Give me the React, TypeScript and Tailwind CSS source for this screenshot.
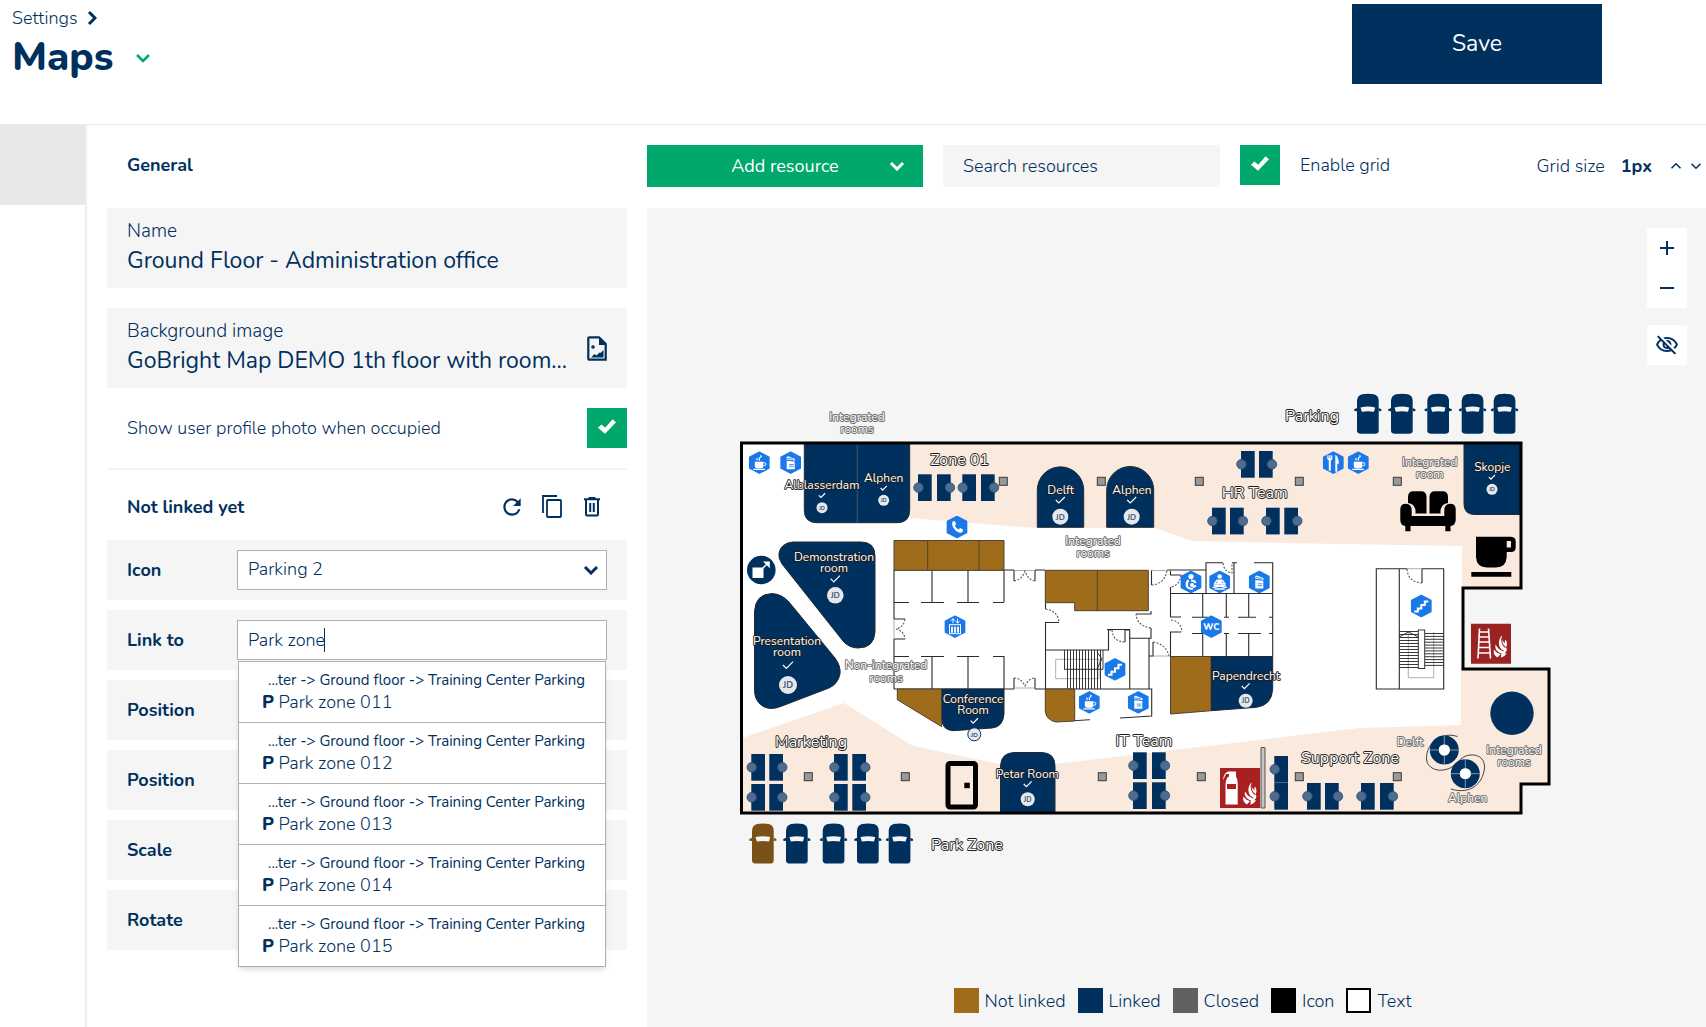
import type { ReactNode } from 'react'
import { MdAdd, MdOutlineVisibilityOff, MdRefresh, MdRemove } from 'react-icons/md'

const NAVY = '#00305e'
const BROWN = '#9f6c1c'
const PEACH = '#faeade'

const results = ['Park zone 011', 'Park zone 012', 'Park zone 013', 'Park zone 014', 'Park zone 015']

const legend = [
  { label: 'Not linked', box: 'bg-[#9f6c1c]' },
  { label: 'Linked', box: 'bg-[#00305e]' },
  { label: 'Closed', box: 'bg-[#606060]' },
  { label: 'Icon', box: 'bg-black' },
  { label: 'Text', box: 'border-2 border-black bg-white' },
]

function Chevron({ className, width = 3 }: { className: string; width?: number }) {
  return (
    <svg viewBox="0 0 16 10" fill="none" stroke="currentColor" strokeWidth={width} className={className} aria-hidden="true">
      <path d="M2 2l6 6 6-6" />
    </svg>
  )
}

function GreenCheck({ id }: { id: string }) {
  return (
    <span className="relative block size-10 shrink-0">
      <input id={id} type="checkbox" defaultChecked className="block size-10 appearance-none bg-[#00a86b]" />
      <svg viewBox="0 0 20 16" className="pointer-events-none absolute left-[11px] top-[11px] h-[15px] w-[18px]" aria-hidden="true">
        <path d="M0 9.500l3.800-3.800 4.200 3.800L16.200 0 20 3.300 7.800 16z" fill="#fff" />
      </svg>
    </span>
  )
}

// ---- floor plan pieces ----

type LabelProps = { x: number; y: number; lines: string[]; size?: number; gap?: number; soft?: boolean }

function Label({ x, y, lines, size = 12, gap = 12, soft }: LabelProps) {
  return (
    <text
      textAnchor="middle"
      fontSize={size}
      fontWeight="400"
      fill="#fff"
      stroke={soft ? '#6b6b6b' : '#1c1c1c'}
      strokeWidth="1.800"
      strokeLinejoin="round"
      paintOrder="stroke"
    >
      {lines.map((line, i) => (
        <tspan key={line} x={x} y={y + size * 0.32 + i * gap}>
          {line}
        </tspan>
      ))}
    </text>
  )
}

function Badge({ x, y, r, check, ring }: { x: number; y: number; r: number; check: number; ring?: boolean }) {
  const s = r / 8
  return (
    <g>
      <path
        d={`M${x - 4.5 * s} ${check}l${3 * s} ${3 * s} ${6 * s} ${-6 * s}`}
        fill="none"
        stroke="#fff"
        strokeWidth="1.2"
      />
      <circle cx={x} cy={y} r={r} fill="#e6e8ec" stroke={ring ? NAVY : 'none'} strokeWidth="1" />
      <text x={x} y={y + r * 0.37} textAnchor="middle" fontSize={r} fontWeight="700" fill="#3c5878">
        JD
      </text>
    </g>
  )
}

function Desk({ x, y, side }: { x: number; y: number; side: 'l' | 'r' }) {
  return (
    <g>
      <rect x={x} y={y} width="13.7" height="26.7" fill={NAVY} />
      <circle cx={side === 'l' ? x + 0.5 : x + 12.9} cy={y + 13.3} r="4.8" fill="#4d6c8e" stroke="#234a74" strokeWidth=".8" />
    </g>
  )
}

function Car({ x, y, fill = NAVY }: { x: number; y: number; fill?: string }) {
  return (
    <g transform={`translate(${x} ${y})`}>
      <path d="M5 .2Q11 -.6 17 .2Q21.600 1.500 21.700 7V37Q21.500 39.800 18 39.800H4Q.3 39.800 0 37V7Q.3 1.500 5 .2z" fill={fill} />
      <path d="M0 14L-2.700 15.300V17L0 17.200zM21.700 14L24.400 15.300V17L21.700 17.200z" fill={fill} />
      <path d="M3.500 13.400Q11 11.500 18.200 13.400L17 17.800Q11 16.800 4.800 17.800z" fill="#f5f5f5" />
    </g>
  )
}

function Hex({ x, y, children }: { x: number; y: number; children: ReactNode }) {
  return (
    <g transform={`translate(${x} ${y})`}>
      <path
        d="M0 -10.500L9.600 -5.500V5.500L0 10.500L-9.600 5.500V-5.500z"
        fill="#1a78e8"
        stroke="#1a78e8"
        strokeWidth="1.500"
        strokeLinejoin="round"
      />
      {children}
    </g>
  )
}

const CoffeeGlyph = () => (
  <g fill="#fff">
    <path d="M-4.500 -1H4V3Q4 5.500 1.500 5.500H-2Q-4.500 5.500 -4.500 3zM-6 6h11.500v1.200H-6z" />
    <path d="M4 0h1.200Q6.500 0 6.500 1.500T5 3H4" fill="none" stroke="#fff" />
    <path d="M-2 -2.200q-1-1.300 0-2.400M.5 -2.200q-1.500-1.800.5-3.200t0-1.800" fill="none" stroke="#fff" strokeWidth="1.200" />
  </g>
)

const PrinterGlyph = () => (
  <g fill="#fff">
    <path d="M-4 -2L4 -1.200V6.500H-4zM-4 -3.200L4.500 -2.200L4 -4L-2.500 -6.500L-4 -6z" />
    <path d="M-1.500 1.800h4.500M-1.500 3.600h4.500M-3.500 -4.500L2.500 -3.500" stroke="#1a78e8" strokeWidth=".8" />
  </g>
)

const StairsGlyph = () => (
  <path d="M-7 5.500h3.500v-3H0v-3.500h3.500V-4.500h3.500" fill="none" stroke="#fff" strokeWidth="2" />
)

function Flames({ x, y, ground }: { x: number; y: number; ground: string }) {
  return (
    <g transform={`translate(${x} ${y})`}>
      <path
        d="M4 23C-1 20 0 16 1 14.500C2 17 4 18.500 6 18.500C2 16 1 12 2.500 9.500C3.500 12 5.500 14.500 8 15C4.500 11 4.500 5 8.500 1C8 4 9 7 11.500 9C11 7 11.500 6 12 5C14.500 9 13.500 12 11.500 14L13 13C14 16 12.500 18 10.500 19L13 18.500C12 21 10 22.500 7 23C8 21.500 8 20.500 7 19.500C6 21.500 5 21 4 23z"
        fill="#fff"
      />
      <path d="M1 14.500Q3 18 8 19.500M2.500 9.500Q4.500 14 10 16.500M8.500 3Q7 9 12 13" fill="none" stroke={ground} strokeWidth="1.100" />
    </g>
  )
}

const desks: [number, number, 'l' | 'r'][] = [
  [918, 474.3, 'l'], [937, 474.3, 'r'], [962.3, 474.3, 'l'], [981, 474.3, 'r'],
  [1241, 451, 'l'], [1259, 451, 'r'],
  [1212, 507.7, 'l'], [1230, 507.7, 'r'], [1266, 507.7, 'l'], [1284.3, 507.7, 'r'],
  [751.3, 754, 'l'], [769.3, 754, 'r'], [834, 754, 'l'], [852.3, 754, 'r'],
  [751.3, 784, 'l'], [769.3, 784, 'r'], [834, 784, 'l'], [852.3, 784, 'r'],
  [1133, 752.3, 'l'], [1152, 752.3, 'r'], [1133, 782.3, 'l'], [1152, 782.3, 'r'],
  [1274.3, 756, 'l'], [1274.3, 783, 'l'],
  [1307, 783, 'l'], [1325, 783, 'r'], [1361, 783, 'l'], [1380, 783, 'r'],
]

const pillars = [
  [1003.3, 481.3], [1101.3, 481.3], [1199.3, 481.3], [1299.3, 481.3], [1397.3, 481.3],
  [808.3, 776.7], [905.3, 776.7], [1102.3, 776.7], [1201.3, 776.7], [1299.3, 776.7], [1397.3, 776.7],
]

const OUTLINE = 'M741.500 443H1521V588H1463V669H1549V784H1521V813H741.500z'

function FloorPlan() {
  return (
    <svg viewBox="647 208 1059 819" className="block w-full" role="img" aria-label="Ground floor map">
      <path d={OUTLINE} fill="#fff" />
      <path d="M910 443H1521V588H1462V546L1280 543L1192 541L1155 528H1035L910 518z" fill={PEACH} />
      <path d="M742 738L844 703L913 746L1000 764H1055L1360 728L1461 725V669H1549V784H1521V813H742z" fill={PEACH} />

      {/* inner walls */}
      <g fill="none" stroke="#2b2b2b" strokeWidth="1.1">
        <path d="M894 570V619H905M894 639H905M894 639V689M894 570H1014M932 570V602M968 570V602M1004 570V602" />
        <path d="M894 602.500H909M921 602.500H944M957 602.500H979M993 602.500H1004M894 656.500H909M921 656.500H944M957 656.500H979M993 656.500H1004" />
        <path d="M932 656V689M968 656V689M1004 656V689M894 689H1014M1035 689H1045" />
        <path d="M1014 570V581M1035 570V581M1014 689V678M1035 689V678M1035 570H1045M1167 570H1206" />
        <path d="M1045.500 603V609M1045.500 622.500H1059M1045.500 622V689M1045 650H1108.500V630H1111M1125 642V630H1129.700V689M1130 638.300H1151V628M1149 638V689M1045 689H1151.700V716L1120 718M1151 611V614H1136M1107 629.500H1130M1148.500 656H1153V642M1151.500 570V585" />
        <path d="M1170.500 571V575H1181M1170.500 587V617H1181M1206 593V562.700H1223M1232 562.700H1237M1254 562.700H1272.700V656M1234 563V593M1170 593.500H1272.700M1202.700 593V617M1226.300 593V617M1248.700 593V617" />
        <path d="M1192 617.300H1208M1224 617.300H1229M1238 617.300H1256M1269 617.300H1273M1170.500 656V632H1181M1192 633.500H1204M1224 633.500H1229M1238 633.500H1261M1269 633.500H1273M1202.700 633V656M1226.300 633V656M1248.700 633V656M1170 656.500H1273" />
        <path d="M1407 568.700H1376.300V689H1443.700V568.700H1422V583M1399.300 568.700V689" />
      </g>
      <g fill="none" stroke="#555" strokeWidth="1.1" strokeDasharray="2 1.500">
        <path d="M1014 581Q1022 580 1025 571Q1028 580 1035 581M1014 678Q1021 678 1025 686Q1029 678 1035 678" />
        <path d="M905 619Q904 627 896 629Q904 631 905 639M1151.500 585Q1165 584 1167 570M1045.500 609Q1058 611 1059 622" />
        <path d="M1151 628Q1137 626 1136 614M1112 630Q1113 642 1125 642M1153 642Q1166 644 1169 656M1181 575Q1180 585 1171 587M1171 620Q1181 621 1182 632M1223 563Q1224 572 1232 573V563M1407 569Q1408 582 1422 583" />
      </g>
      <g fill="none" stroke="#999" strokeWidth=".8">
        <path d="M1014 570.500H1035M1014 688H1035M1151 570.500H1167M1153 656H1170M894 619V639M1407 568.700H1422" />
        <path d="M1055.700 659.300H1099V678.700H1055.700zM1408.300 632V677.700H1433.700V632" />
      </g>

      {/* stairs */}
      <g stroke="#222" strokeWidth=".9" fill="none">
        {Array.from({ length: 13 }, (_, i) => (
          <path key={i} d={`M${1064.5 + i * 3} 650V${i > 0 ? 689 : 669}`} />
        ))}
        <path d="M1064 669.300H1103V650" />
        {Array.from({ length: 13 }, (_, i) => (
          <path key={i} d={`M1399.300 ${631.5 + i * 3}H1418.300${i < 12 ? `M1424.700 ${633.5 + i * 2.9}H1443.700` : ''}`} />
        ))}
        <path d="M1399.300 637L1408.300 632L1418.300 637M1097 652L1102 659L1097 669" />
        <rect x="1418.300" y="630" width="6.400" height="38.500" fill="#fff" />
      </g>

      {/* rooms that are not linked */}
      <g fill={BROWN} stroke="#4c4334" strokeWidth="1">
        <path d="M894 540.500H1004V570.300H894zM927.700 540.500V570.300M979 540.500V570.300" />
        <path d="M1045.300 570.300H1148.300V610.700H1074.700V602.700H1045.300zM1097.300 570.300V610.700" />
        <path d="M897.300 689H941.700V726.700L897.300 699.700z" />
        <path d="M1045.300 689H1074.700V721L1056 722Q1046 720 1045.300 711z" />
        <path d="M1170.500 656.500H1211.300V710.700L1170.500 714z" />
      </g>
      <path d="M1074.700 720.700L1090 719.700" stroke="#333" />

      {/* linked rooms */}
      <g fill={NAVY} stroke="#232a33" strokeWidth="1">
        <path d="M804.300 444H909.700V510Q909.700 522.700 897 522.700H817Q804.300 522.700 804.300 510z" />
        <path d="M857.300 444V522.700" stroke="#4a5766" />
        <path d="M793 542H861Q875 542 875 556V632Q874 648 858 648Q849 648 843 641L782 564Q778 558 779 553Q781 543 793 542z" />
        <path d="M754.500 612Q755 594 772 593.500Q782 594 789 602L835 658Q841 666 840 674Q838 684 829 688L782 706Q768 712 760 704Q754.500 699 754.500 690z" />
        <path d="M942 689H1004V714Q1003 727 992 728L953 730.700Q942 730 942 719z" />
        <path d="M1037.300 527.300V490A23.200 23.200 0 0 1 1083.700 490V527.300z" />
        <path d="M1106.700 527.300V490A23.500 23.500 0 0 1 1153.700 490V527.300z" />
        <path d="M1211.300 656.500H1272.700V689Q1272 705 1256.700 707.300L1211.300 710.700z" />
        <path d="M1464 444H1520V514.500H1474Q1464 514 1464 504z" />
        <path d="M1000.500 812V766Q1001 753 1014 752.500H1042Q1055 753 1055 766V812z" />
      </g>
      <circle cx="1512" cy="713.300" r="21.700" fill={NAVY} />

      {/* round tables */}
      <path d="M1457.500 736.500C1440 731 1426 744 1426.500 759C1427 768 1437 772 1446 769.500C1457 767 1459 756 1470 755C1480 754 1485 760 1484.500 768C1483 784 1470 795 1451 789" fill="none" stroke="#333" strokeWidth=".9" />
      {[[1444.3, 750], [1465.3, 773.7]].map(([x, y]) => (
        <g key={x}>
          <circle cx={x} cy={y} r="10" fill="none" stroke={NAVY} strokeWidth="9" />
          <circle cx={x} cy={y} r="5.500" fill="#fff" />
          <path d={`M${x} ${y - 14.5}V${y - 5}M${x} ${y + 14.5}V${y + 5}M${x - 14.5} ${y}H${x - 5}M${x + 14.5} ${y}H${x + 5}`} stroke="#9db0c4" strokeWidth=".8" />
        </g>
      ))}

      <path d={OUTLINE} fill="none" stroke="#000" strokeWidth="3" />

      {pillars.map(([x, y]) => (
        <rect key={`${x}-${y}`} x={x - 4} y={y - 4} width="8" height="8" fill="#999" stroke="#3a3a3a" />
      ))}
      {desks.map(([x, y, side]) => (
        <Desk key={`${x}-${y}`} x={x} y={y} side={side} />
      ))}
      {[1357, 1391, 1427.3, 1461.7, 1493.7].map((x) => (
        <Car key={x} x={x} y={394} />
      ))}
      {[752, 786, 822.7, 857, 888.7].map((x, i) => (
        <Car key={x} x={x} y={823.7} fill={i === 0 ? '#7a5218' : NAVY} />
      ))}

      {/* expand marker */}
      <circle cx="761.300" cy="570" r="14.300" fill={NAVY} />
      <path d="M752.500 567.500h11v10.500h-11zM763 561.500h6.800v6.800z" fill="#fff" />
      <path d="M762 569l6-6" stroke="#fff" strokeWidth="1.500" />

      {/* facilities */}
      <Hex x={759.3} y={462.7}><CoffeeGlyph /></Hex>
      <Hex x={790.7} y={462.7}><PrinterGlyph /></Hex>
      <Hex x={957} y={527}>
        <path d="M-4.500 -5.500L-2.200 -6L-.8 -2.800L-2.200 -1.400Q-1 1.200 1.600 2.400L3 1L6 2.400L5.500 5Q3 7 -1.500 3.500Q-6 -1 -4.500 -5.500z" fill="#fff" />
      </Hex>
      <Hex x={955} y={626.7}>
        <rect x="-5.500" y="-2" width="11" height="9" fill="none" stroke="#fff" />
        <path d="M-3 0v6M0 0v6M3 0v6" stroke="#fff" strokeWidth="1.800" />
        <path d="M-2 -3.500V-8M-4 -6l2-2 2 2M2.500 -8V-3.500M.6 -5.500l2 2 2-2" fill="none" stroke="#fff" />
      </Hex>
      <Hex x={1191} y={582}>
        <circle cx="0" cy="-5.500" r="2.600" fill="#fff" />
        <path d="M-2.500 -2Q-5 1 -4 4.500Q-2 7.500 2 6.500" fill="none" stroke="#fff" strokeWidth="2.200" />
        <path d="M0 -1.500Q4 -1.500 4.500 1" fill="none" stroke="#fff" strokeWidth="2" />
        <circle cx="1" cy="3" r="2" fill="#fff" />
        <path d="M2 5.500L5 3.500" stroke="#fff" strokeWidth="2" />
      </Hex>
      <Hex x={1219.700} y={582}>
        <circle cx="0" cy="-5.500" r="2.300" fill="#fff" />
        <path d="M-2.500 -2.500h5v5h-5z" fill="#fff" />
        <path d="M-2.500 -2L-5 1.500L-1 2M2.500 -2L5 1.500L1 2M-7 5.500L6 3M7 5.500L-6 3M-5 7H5" fill="none" stroke="#fff" strokeWidth="1.300" />
      </Hex>
      <Hex x={1259.3} y={582}><PrinterGlyph /></Hex>
      <Hex x={1211.3} y={626.700}>
        <text y="3" textAnchor="middle" fontSize="9" fontWeight="800" fill="#fff">WC</text>
      </Hex>
      <Hex x={1333.3} y={462.7}>
        <path d="M-3.500 -3V8" stroke="#fff" strokeWidth="2" />
        <path d="M-6 -7.500h1.200v3h.7v-3h1.200v3h.7v-3H-1V-3.500Q-3.500 -1 -6 -3.500z" fill="#fff" />
        <path d="M2 -8Q5.500 -6 5.500 1H4V9H2z" fill="#fff" />
      </Hex>
      <Hex x={1358.3} y={462.7}><CoffeeGlyph /></Hex>
      <Hex x={1421.3} y={606}><StairsGlyph /></Hex>
      <Hex x={1115} y={669.3}><StairsGlyph /></Hex>
      <Hex x={1089.3} y={702.3}><CoffeeGlyph /></Hex>
      <Hex x={1138.3} y={702.3}><PrinterGlyph /></Hex>

      {/* sofa */}
      <path d="M1408 503V497Q1408 491.300 1413.500 491.300H1421Q1426.500 491.300 1426.500 497V513.500H1415.500V510Q1414.500 504 1408 503zM1429.500 513.500V497Q1429.500 491.300 1435 491.300H1442.500Q1448 491.300 1448 497V503Q1441.500 504 1440.500 510V513.500z" />
      <path d="M1400.300 509Q1400.500 503.800 1406 503.800Q1411.500 504 1411.700 510V516H1444.300V510Q1444.500 504 1450 503.800Q1455.500 503.800 1455.700 509V520Q1455.500 525.500 1450.500 526V531.300H1445.300V526H1410.500V531.300H1405.300V526Q1400.300 525.500 1400.300 520z" />
      {/* coffee mug */}
      <path fillRule="evenodd" d="M1476 536.700H1511Q1515.700 537 1515.700 541.500V547.500Q1515.500 552 1511 552H1506.700V557Q1506 567.500 1496 567.500H1487Q1476.500 567.500 1476 557zM1506.700 541V547.500H1511V541z" />
      <path d="M1471.300 572h40v4.700h-40z" />
      {/* door */}
      <rect x="948" y="763.500" width="27.500" height="43.500" rx="2" fill={PEACH} stroke="#000" strokeWidth="5" />
      <path d="M964.300 782.700h5.500v5.500h-5.500z" />

      {/* fire extinguisher */}
      <path d="M1220 768h40v40h-40z" fill="#a92023" />
      <path d="M1225.500 804.500V784Q1226 777.500 1229 776.500V774H1226L1223 780.500Q1223.500 773 1228 771.500H1236V776.500Q1237.700 779 1237.700 784V804.500z" fill="#fff" />
      <path d="M1227 784h9v5h-9z" fill="#a92023" />
      <Flames x={1243} y={781.5} ground="#a92023" />
      <path d="M1261 747.500h4v60.500h-4z" fill="#c4c4c4" stroke="#555" />

      {/* fire ladder */}
      <path d="M1471 623.700h40v40h-40z" fill="#9b2222" />
      <path d="M1479.500 628.500L1478 658.500M1488.500 628.500L1490.500 658.500" stroke="#fff" strokeWidth="1.600" />
      <path d="M1479 632H1489M1479 637H1489M1479 642H1490M1478 647.500H1490M1478 653H1490" stroke="#fff" strokeWidth="1.400" />
      <Flames x={1493.500} y={634.500} ground="#9b2222" />

      {/* captions */}
      <Label x={857} y={417} lines={['Integrated', 'rooms']} gap={12.5} soft />
      <Label x={822} y={485.300} lines={['Alblasserdam']} />
      <Label x={883.700} y={478.300} lines={['Alphen']} />
      <Label x={959.700} y={459.700} lines={['Zone 01']} size={16} />
      <Label x={834} y={557.300} lines={['Demonstration', 'room']} gap={11.3} />
      <Label x={787} y={641.300} lines={['Presentation', 'room']} gap={11.3} />
      <Label x={886} y={665.300} lines={['Non-integrated', 'rooms']} gap={13} soft />
      <Label x={973} y={699.300} lines={['Conference', 'Room']} gap={11} />
      <Label x={811} y={742} lines={['Marketing']} size={16} />
      <Label x={967} y={845} lines={['Park Zone']} size={16} />
      <Label x={1312} y={416} lines={['Parking']} size={16} />
      <Label x={1429.700} y={462.300} lines={['Integrated', 'room']} soft />
      <Label x={1492.300} y={467.300} lines={['Skopje']} />
      <Label x={1060.700} y={490} lines={['Delft']} />
      <Label x={1132} y={490} lines={['Alphen']} />
      <Label x={1093} y={541.300} lines={['Integrated', 'rooms']} soft />
      <Label x={1254.700} y={493.300} lines={['HR Team']} size={16} />
      <Label x={1246} y={676} lines={['Papendrecht']} />
      <Label x={1144} y={740.700} lines={['IT Team']} size={16} />
      <Label x={1027.300} y={774.300} lines={['Petar Room']} />
      <Label x={1350} y={757.700} lines={['Support Zone']} size={16} />
      <Label x={1410} y={742.300} lines={['Delft']} soft />
      <Label x={1467.700} y={797.700} lines={['Alphen']} soft />
      <Label x={1514} y={750} lines={['Integrated', 'rooms']} soft />

      <Badge x={822} y={507.7} r={5.500} check={495.3} />
      <Badge x={883.7} y={500.3} r={5.500} check={488} />
      <Badge x={835.3} y={595.3} r={8.300} check={578.7} />
      <Badge x={788} y={685} r={9} check={665} />
      <Badge x={974.3} y={734.3} r={6.500} check={720.7} ring />
      <Badge x={1060.3} y={516.7} r={8} check={500} />
      <Badge x={1131.7} y={516.7} r={8} check={500} />
      <Badge x={1492} y={489.3} r={5.500} check={477} />
      <Badge x={1245.7} y={700.7} r={7} check={686} />
      <Badge x={1027.7} y={799.3} r={7} check={784} />
    </svg>
  )
}

function SettingRow({ label, htmlFor, children }: { label: string; htmlFor?: string; children?: ReactNode }) {
  return (
    <div className="flex h-15 items-center bg-[#f5f5f5] px-5">
      {htmlFor ? (
        <label htmlFor={htmlFor} className="w-[110px] shrink-0 font-bold">
          {label}
        </label>
      ) : (
        <span className="w-[110px] shrink-0 font-bold">{label}</span>
      )}
      {children}
    </div>
  )
}

export default function App() {
  return (
    <div className="flex min-h-screen flex-col bg-white font-['Nunito','Lato',sans-serif] text-lg font-light leading-6 text-[#00305e]">
      <header className="flex h-[125px] items-start justify-between border-b border-[#e8e8e8] pl-3 pr-[104px] pt-1">
        <div className="pt-0.5">
          <nav className="flex items-center gap-1.5">
            <a href="#settings">Settings</a>
            <Chevron className="h-2.5 w-4 -rotate-90" />
          </nav>
          <div className="flex items-center gap-[22px]">
            <h1 className="text-[40px] font-extrabold leading-[54px]">Maps</h1>
            <button type="button" aria-label="Switch page" className="pt-0.5 text-[#00a86b]">
              <Chevron className="h-2.5 w-4" width={2.5} />
            </button>
          </div>
        </div>
        <button type="button" className="h-20 w-[250px] bg-[#00305e] text-[23px] font-normal text-white">
          Save
        </button>
      </header>

      <div className="flex flex-1">
        <aside className="w-[87px] shrink-0 border-r-2 border-[#eeeeee]">
          <div className="h-20 bg-[#e8e8e8]" />
        </aside>

        <section className="w-[560px] shrink-0 px-5 pt-5">
          <h2 className="px-5 py-2 font-bold">General</h2>

          <div className="mt-[23px] h-20 bg-[#f5f5f5] px-5 pt-[11px]">
            <label htmlFor="name" className="block text-[19px]">
              Name
            </label>
            <input
              id="name"
              defaultValue="Ground Floor - Administration office"
              className="mt-px block h-8 w-full bg-transparent text-[23px] font-normal outline-none"
            />
          </div>

          <div className="mt-5 flex h-20 items-center bg-[#f5f5f5] px-5">
            <div className="flex-1 self-start pt-[11px]">
              <label htmlFor="background" className="block text-[19px]">
                Background image
              </label>
              <input
                id="background"
                defaultValue="GoBright Map DEMO 1th floor with room..."
                className="mt-px block h-8 w-full bg-transparent text-[23px] font-normal outline-none"
              />
            </div>
            <button type="button" aria-label="Choose image">
              <svg viewBox="0 0 20 25" className="h-[25px] w-5" aria-hidden="true">
                <path d="M2.500 1.300H12L18.700 8V23.700H2.500Q1.300 23.700 1.300 22.500V2.500Q1.300 1.300 2.500 1.300z" fill="none" stroke="currentColor" strokeWidth="2.200" />
                <path d="M12 1v8h7zM4 21.500l3.500-3.500 2 1.500 3-3 1 .5 3-3v7.500z" fill="currentColor" />
                <circle cx="6" cy="11" r="1.800" fill="currentColor" />
              </svg>
            </button>
          </div>

          <div className="mt-5 flex items-center justify-between pl-5">
            <label htmlFor="photo">Show user profile photo when occupied</label>
            <GreenCheck id="photo" />
          </div>

          <div className="mt-5 flex items-center justify-between border-t-2 border-[#f5f5f5] pb-[9px] pl-5 pr-[15px] pt-[13px]">
            <h2 className="py-3 font-bold">Not linked yet</h2>
            <div className="flex">
              <button type="button" aria-label="Refresh" className="flex size-10 items-center justify-center">
                <MdRefresh className="size-[26px]" />
              </button>
              <button type="button" aria-label="Duplicate" className="flex size-10 items-center justify-center">
                <svg viewBox="0 0 24 26" fill="none" stroke="currentColor" strokeWidth="1.800" className="h-[26px] w-6" aria-hidden="true">
                  <rect x="7" y="6" width="14" height="17" rx="1" />
                  <path d="M3 19V2h14" />
                </svg>
              </button>
              <button type="button" aria-label="Delete" className="flex size-10 items-center justify-center">
                <svg viewBox="0 0 20 22" fill="none" stroke="currentColor" strokeWidth="2" className="h-[22px] w-5" aria-hidden="true">
                  <path d="M2 3.200h16M6.500 2h7M4 3v15.500q0 1 1 1h10q1 0 1-1V3M8.200 7v9M11.800 7v9" />
                </svg>
              </button>
            </div>
          </div>

          <div className="flex flex-col gap-2.5">
            <SettingRow label="Icon" htmlFor="icon">
              <div className="relative flex-1">
                <select id="icon" className="block h-10 w-full appearance-none border border-[#b0b0b0] bg-white px-2.5 pb-0.5 outline-none">
                  <option>Parking 2</option>
                </select>
                <Chevron className="pointer-events-none absolute right-2 top-[15px] h-2.5 w-4" />
              </div>
            </SettingRow>
            <SettingRow label="Link to" htmlFor="link">
              <div className="relative flex-1">
                <input id="link" defaultValue="Park zone" className="block h-10 w-full border border-[#b0b0b0] bg-white px-2.5 outline-none" />
                <span className="pointer-events-none absolute left-[87px] top-2 h-6 w-px bg-[#00305e]" />
                <ul className="absolute inset-x-px top-[41px] z-10 border border-b-0 border-[#b0b0b0] bg-white shadow-md">
                  {results.map((name) => (
                    <li key={name} className="border-b border-[#b0b0b0]">
                      <button type="button" className="block h-[60px] w-full px-5 pb-0.5 text-left">
                        <span className="block text-right text-[15px] font-normal leading-[22px]">...ter -&gt; Ground floor -&gt; Training Center Parking</span>
                        <span className="block pl-[3px] leading-[22px]">
                          <b className="font-extrabold">P</b> {name}
                        </span>
                      </button>
                    </li>
                  ))}
                </ul>
              </div>
            </SettingRow>
            <SettingRow label="Position" />
            <SettingRow label="Position" />
            <SettingRow label="Scale" />
            <SettingRow label="Rotate" />
          </div>
        </section>

        <main className="min-w-0 flex-1">
          <div className="flex h-[83px] items-start gap-5 pt-5">
            <button type="button" className="flex h-[42px] w-[276px] items-center bg-[#00a86b] px-[18px] font-normal text-white">
              <span className="flex-1 pl-4 text-center">Add resource</span>
              <Chevron className="h-2.5 w-4" />
            </button>
            <input
              type="search"
              aria-label="Search resources"
              placeholder="Search resources"
              className="h-[42px] w-[277px] bg-[#f5f5f5] px-5 outline-none placeholder:text-[#00305e]"
            />
            <div className="flex items-center gap-5">
              <GreenCheck id="grid" />
              <label htmlFor="grid">Enable grid</label>
            </div>
            <div className="ml-auto flex h-[42px] items-center pr-1">
              <span>Grid size</span>
              <span className="ml-4 font-bold">1px</span>
              <button type="button" aria-label="Increase" className="ml-[18px]">
                <Chevron className="h-2 w-3 rotate-180" width={2} />
              </button>
              <button type="button" aria-label="Decrease" className="ml-2">
                <Chevron className="h-2 w-3" width={2} />
              </button>
            </div>
          </div>

          <div className="relative bg-[#f5f5f5]">
            <FloorPlan />
            <div className="absolute right-[19px] top-5 flex flex-col">
              <button type="button" aria-label="Zoom in" className="flex size-10 items-center justify-center bg-white">
                <MdAdd className="size-6" />
              </button>
              <button type="button" aria-label="Zoom out" className="flex size-10 items-center justify-center bg-white">
                <MdRemove className="size-6" />
              </button>
              <button type="button" aria-label="Hide labels" className="mt-[17px] flex size-10 items-center justify-center bg-white">
                <MdOutlineVisibilityOff className="size-6" />
              </button>
            </div>
            <ul className="absolute inset-x-0 bottom-3.5 flex justify-center gap-3 pl-3">
              {legend.map(({ label, box }) => (
                <li key={label} className="flex items-center gap-1.5">
                  <span className={`size-[25px] ${box}`} />
                  {label}
                </li>
              ))}
            </ul>
          </div>
        </main>
      </div>
    </div>
  )
}
